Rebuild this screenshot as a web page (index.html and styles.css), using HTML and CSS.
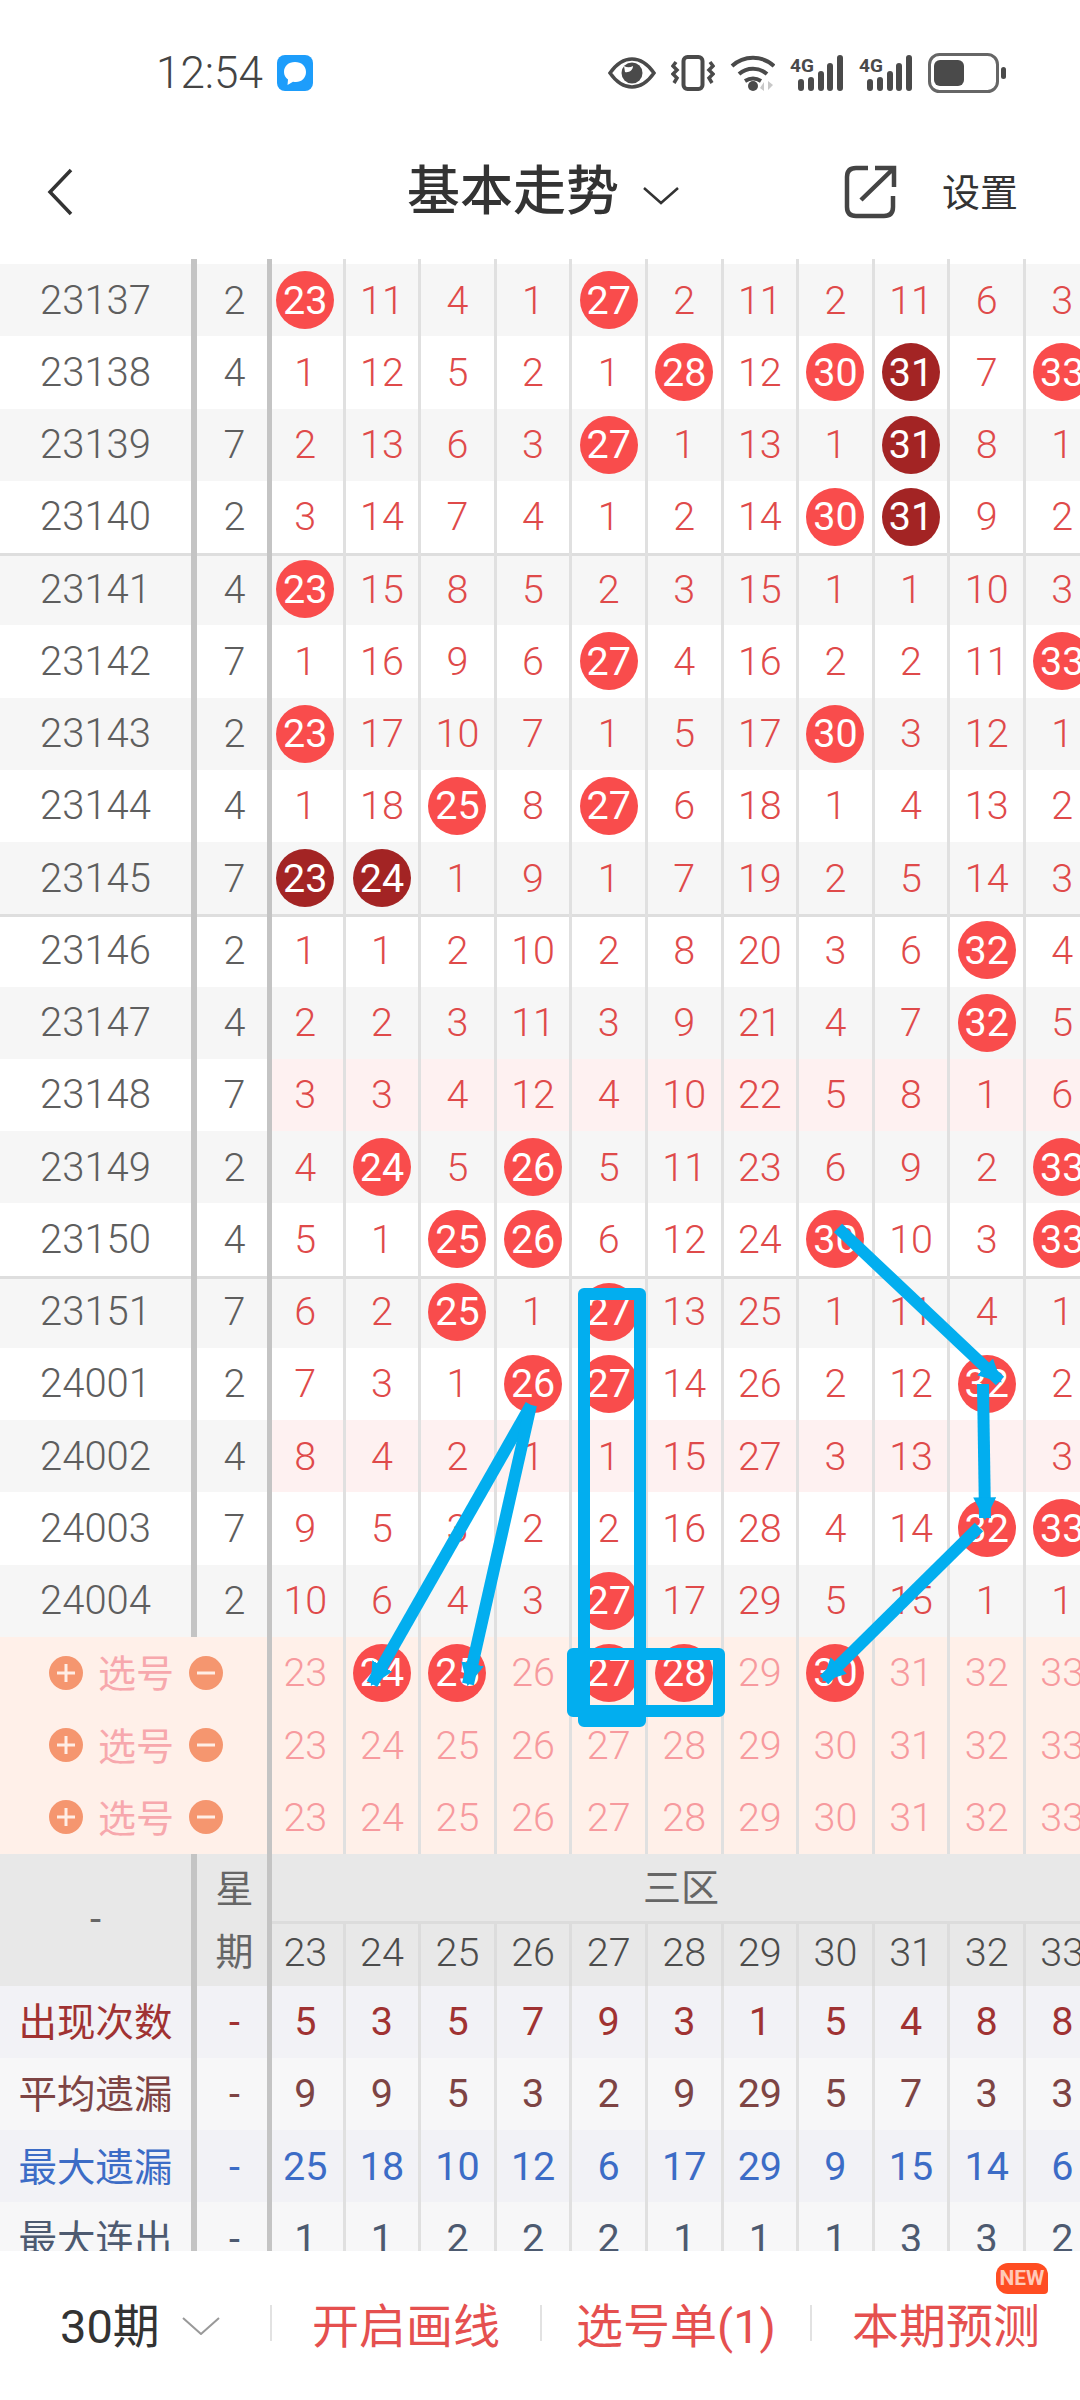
FILE: index.html
```html
<!DOCTYPE html>
<html lang="zh-CN">
<head>
  <meta charset="UTF-8">
  <meta name="viewport" content="width=device-width, initial-scale=1.0">
  <title>基本走势</title>
  <link rel="stylesheet" href="styles.css">
</head>
<body>
<div class="page">
  <div class="status">
    <span class="time">12:54</span>
    <svg class="msg" width="36" height="36" viewBox="0 0 36 36"><rect width="36" height="36" rx="8" fill="#1d9dfb"/><path d="M18 7c6.500 0 11 4 11 10s-4.500 10-10 10c-1 0-2 0-3-.3L10.500 30l.5-5.500C8.500 22.500 7 20 7 17 7 11 11.500 7 18 7z" fill="#fff"/></svg>
    <div class="icons">
      <svg width="48" height="32" viewBox="0 0 48 32"><path d="M2 16C9 6 16 2 24 2s15 4 22 14c-7 10-14 14-22 14S9 26 2 16z" fill="none" stroke="#4a4a4a" stroke-width="3.500"/><circle cx="24" cy="16" r="10.500" fill="#4a4a4a"/><path d="M16 9a9 9 0 0 0 9 0c0 4-4 7-8 6z" fill="#fff"/></svg>
      <svg width="44" height="36" viewBox="0 0 44 36"><rect x="12.500" y="2" width="19" height="32" rx="4" fill="none" stroke="#4a4a4a" stroke-width="4"/><path d="M5 7l-3 4 4 4-4 4 4 4-3 5M39 7l3 4-4 4 4 4-4 4 3 5" fill="none" stroke="#4a4a4a" stroke-width="3.500"/></svg>
      <svg width="45" height="36" viewBox="0 0 45 36"><path d="M2 11C14 0 32 0 44 11M9 19c8-7 20-7 28 0M15 26c5-3 11-3 16 0" fill="none" stroke="#4a4a4a" stroke-width="4"/><circle cx="23" cy="31" r="5" fill="#4a4a4a"/><path d="M34 36v-9l-4 6zM38 26v9l5-5z" fill="#c8c8c8"/></svg>
      <svg width="54" height="36" viewBox="0 0 54 36"><text x="0" y="17" class="net">4G</text><path d="M11 33v-6M21 33v-8M31 33V19M40 33V11M50 33V3" fill="none" stroke="#4a4a4a" stroke-width="6" stroke-linecap="round"/></svg>
      <svg width="54" height="36" viewBox="0 0 54 36"><text x="0" y="17" class="net">4G</text><path d="M11 33v-6M21 33v-8M31 33V19M40 33V11M50 33V3" fill="none" stroke="#4a4a4a" stroke-width="6" stroke-linecap="round"/></svg>
      <svg width="78" height="40" viewBox="0 0 78 40"><rect x="1.500" y="1.500" width="68" height="37" rx="10" fill="none" stroke="#666" stroke-width="3"/><rect x="6" y="7" width="30" height="26" rx="6" fill="#4a4a4a"/><rect x="73" y="14" width="5" height="12" rx="2.500" fill="#4a4a4a"/></svg>
    </div>
  </div>

  <div class="nav">
    <svg width="26" height="48" viewBox="0 0 26 48"><path d="M24 2L3 24l21 22" fill="none" stroke="#333" stroke-width="3.500"/></svg>
    <h1 class="title">基本走势</h1>
    <svg class="caret" width="36" height="18" viewBox="0 0 36 18"><path d="M1 1l17 15L35 1" fill="none" stroke="#333" stroke-width="2.500"/></svg>
    <svg class="share" width="53" height="54" viewBox="0 0 53 54"><path d="M24 3H12C6 3 3 6 3 12v30c0 6 3 9 9 9h28c6 0 9-3 9-9V31" fill="none" stroke="#444" stroke-width="4.500"/><path d="M17 35L49 4M31 3h19v19" fill="none" stroke="#444" stroke-width="4.500"/></svg>
    <span class="set">设置</span>
  </div>

  <div class="chart">
    <div class="row peek"><span class="no"></span><span class="wk"></span><span class="c"></span><span class="c"></span><span class="c"></span><span class="c"></span><span class="c"></span><span class="c"></span><span class="c"></span><span class="c"></span><span class="c"></span><span class="c"></span><span class="c"></span></div>
    <div class="row alt"><span class="no">23137</span><span class="wk">2</span><span class="c"><b class="ball">23</b></span><span class="c">11</span><span class="c">4</span><span class="c">1</span><span class="c"><b class="ball">27</b></span><span class="c">2</span><span class="c">11</span><span class="c">2</span><span class="c">11</span><span class="c">6</span><span class="c">3</span></div>
    <div class="row"><span class="no">23138</span><span class="wk">4</span><span class="c">1</span><span class="c">12</span><span class="c">5</span><span class="c">2</span><span class="c">1</span><span class="c"><b class="ball">28</b></span><span class="c">12</span><span class="c"><b class="ball">30</b></span><span class="c"><b class="ball dk">31</b></span><span class="c">7</span><span class="c"><b class="ball">33</b></span></div>
    <div class="row alt"><span class="no">23139</span><span class="wk">7</span><span class="c">2</span><span class="c">13</span><span class="c">6</span><span class="c">3</span><span class="c"><b class="ball">27</b></span><span class="c">1</span><span class="c">13</span><span class="c">1</span><span class="c"><b class="ball dk">31</b></span><span class="c">8</span><span class="c">1</span></div>
    <div class="row"><span class="no">23140</span><span class="wk">2</span><span class="c">3</span><span class="c">14</span><span class="c">7</span><span class="c">4</span><span class="c">1</span><span class="c">2</span><span class="c">14</span><span class="c"><b class="ball">30</b></span><span class="c"><b class="ball dk">31</b></span><span class="c">9</span><span class="c">2</span></div>
    <div class="row alt sep"><span class="no">23141</span><span class="wk">4</span><span class="c"><b class="ball">23</b></span><span class="c">15</span><span class="c">8</span><span class="c">5</span><span class="c">2</span><span class="c">3</span><span class="c">15</span><span class="c">1</span><span class="c">1</span><span class="c">10</span><span class="c">3</span></div>
    <div class="row"><span class="no">23142</span><span class="wk">7</span><span class="c">1</span><span class="c">16</span><span class="c">9</span><span class="c">6</span><span class="c"><b class="ball">27</b></span><span class="c">4</span><span class="c">16</span><span class="c">2</span><span class="c">2</span><span class="c">11</span><span class="c"><b class="ball">33</b></span></div>
    <div class="row alt"><span class="no">23143</span><span class="wk">2</span><span class="c"><b class="ball">23</b></span><span class="c">17</span><span class="c">10</span><span class="c">7</span><span class="c">1</span><span class="c">5</span><span class="c">17</span><span class="c"><b class="ball">30</b></span><span class="c">3</span><span class="c">12</span><span class="c">1</span></div>
    <div class="row"><span class="no">23144</span><span class="wk">4</span><span class="c">1</span><span class="c">18</span><span class="c"><b class="ball">25</b></span><span class="c">8</span><span class="c"><b class="ball">27</b></span><span class="c">6</span><span class="c">18</span><span class="c">1</span><span class="c">4</span><span class="c">13</span><span class="c">2</span></div>
    <div class="row alt"><span class="no">23145</span><span class="wk">7</span><span class="c"><b class="ball dk">23</b></span><span class="c"><b class="ball dk">24</b></span><span class="c">1</span><span class="c">9</span><span class="c">1</span><span class="c">7</span><span class="c">19</span><span class="c">2</span><span class="c">5</span><span class="c">14</span><span class="c">3</span></div>
    <div class="row sep"><span class="no">23146</span><span class="wk">2</span><span class="c">1</span><span class="c">1</span><span class="c">2</span><span class="c">10</span><span class="c">2</span><span class="c">8</span><span class="c">20</span><span class="c">3</span><span class="c">6</span><span class="c"><b class="ball">32</b></span><span class="c">4</span></div>
    <div class="row alt"><span class="no">23147</span><span class="wk">4</span><span class="c">2</span><span class="c">2</span><span class="c">3</span><span class="c">11</span><span class="c">3</span><span class="c">9</span><span class="c">21</span><span class="c">4</span><span class="c">7</span><span class="c"><b class="ball">32</b></span><span class="c">5</span></div>
    <div class="row miss"><span class="no">23148</span><span class="wk">7</span><span class="c">3</span><span class="c">3</span><span class="c">4</span><span class="c">12</span><span class="c">4</span><span class="c">10</span><span class="c">22</span><span class="c">5</span><span class="c">8</span><span class="c">1</span><span class="c">6</span></div>
    <div class="row alt"><span class="no">23149</span><span class="wk">2</span><span class="c">4</span><span class="c"><b class="ball">24</b></span><span class="c">5</span><span class="c"><b class="ball">26</b></span><span class="c">5</span><span class="c">11</span><span class="c">23</span><span class="c">6</span><span class="c">9</span><span class="c">2</span><span class="c"><b class="ball">33</b></span></div>
    <div class="row"><span class="no">23150</span><span class="wk">4</span><span class="c">5</span><span class="c">1</span><span class="c"><b class="ball">25</b></span><span class="c"><b class="ball">26</b></span><span class="c">6</span><span class="c">12</span><span class="c">24</span><span class="c"><b class="ball">30</b></span><span class="c">10</span><span class="c">3</span><span class="c"><b class="ball">33</b></span></div>
    <div class="row alt sep"><span class="no">23151</span><span class="wk">7</span><span class="c">6</span><span class="c">2</span><span class="c"><b class="ball">25</b></span><span class="c">1</span><span class="c"><b class="ball">27</b></span><span class="c">13</span><span class="c">25</span><span class="c">1</span><span class="c">11</span><span class="c">4</span><span class="c">1</span></div>
    <div class="row"><span class="no">24001</span><span class="wk">2</span><span class="c">7</span><span class="c">3</span><span class="c">1</span><span class="c"><b class="ball">26</b></span><span class="c"><b class="ball">27</b></span><span class="c">14</span><span class="c">26</span><span class="c">2</span><span class="c">12</span><span class="c"><b class="ball">32</b></span><span class="c">2</span></div>
    <div class="row alt miss"><span class="no">24002</span><span class="wk">4</span><span class="c">8</span><span class="c">4</span><span class="c">2</span><span class="c">1</span><span class="c">1</span><span class="c">15</span><span class="c">27</span><span class="c">3</span><span class="c">13</span><span class="c">1</span><span class="c">3</span></div>
    <div class="row"><span class="no">24003</span><span class="wk">7</span><span class="c">9</span><span class="c">5</span><span class="c">3</span><span class="c">2</span><span class="c">2</span><span class="c">16</span><span class="c">28</span><span class="c">4</span><span class="c">14</span><span class="c"><b class="ball">32</b></span><span class="c"><b class="ball">33</b></span></div>
    <div class="row alt"><span class="no">24004</span><span class="wk">2</span><span class="c">10</span><span class="c">6</span><span class="c">4</span><span class="c">3</span><span class="c"><b class="ball">27</b></span><span class="c">17</span><span class="c">29</span><span class="c">5</span><span class="c">15</span><span class="c">1</span><span class="c">1</span></div>

    <div class="row sel">
      <span class="pick"><svg width="34" height="34" viewBox="0 0 34 34"><circle cx="17" cy="17" r="17" fill="#f5966f"/><path d="M8 17h18M17 8v18" stroke="#ffeee6" stroke-width="3"/></svg><span class="pick-txt">选号</span><svg width="34" height="34" viewBox="0 0 34 34"><circle cx="17" cy="17" r="17" fill="#f5966f"/><path d="M8 17h18" stroke="#ffeee6" stroke-width="3"/></svg></span>
      <span class="c">23</span><span class="c"><b class="ball">24</b></span><span class="c"><b class="ball">25</b></span><span class="c">26</span><span class="c"><b class="ball">27</b></span><span class="c"><b class="ball">28</b></span><span class="c">29</span><span class="c"><b class="ball">30</b></span><span class="c">31</span><span class="c">32</span><span class="c">33</span>
    </div>
    <div class="row sel">
      <span class="pick"><svg width="34" height="34" viewBox="0 0 34 34"><circle cx="17" cy="17" r="17" fill="#f5966f"/><path d="M8 17h18M17 8v18" stroke="#ffeee6" stroke-width="3"/></svg><span class="pick-txt">选号</span><svg width="34" height="34" viewBox="0 0 34 34"><circle cx="17" cy="17" r="17" fill="#f5966f"/><path d="M8 17h18" stroke="#ffeee6" stroke-width="3"/></svg></span>
      <span class="c">23</span><span class="c">24</span><span class="c">25</span><span class="c">26</span><span class="c">27</span><span class="c">28</span><span class="c">29</span><span class="c">30</span><span class="c">31</span><span class="c">32</span><span class="c">33</span>
    </div>
    <div class="row sel">
      <span class="pick"><svg width="34" height="34" viewBox="0 0 34 34"><circle cx="17" cy="17" r="17" fill="#f5966f"/><path d="M8 17h18M17 8v18" stroke="#ffeee6" stroke-width="3"/></svg><span class="pick-txt">选号</span><svg width="34" height="34" viewBox="0 0 34 34"><circle cx="17" cy="17" r="17" fill="#f5966f"/><path d="M8 17h18" stroke="#ffeee6" stroke-width="3"/></svg></span>
      <span class="c">23</span><span class="c">24</span><span class="c">25</span><span class="c">26</span><span class="c">27</span><span class="c">28</span><span class="c">29</span><span class="c">30</span><span class="c">31</span><span class="c">32</span><span class="c">33</span>
    </div>

    <div class="head">
      <span class="no">-</span>
      <span class="wk wk-stack"><span>星</span><span>期</span></span>
      <div class="head-main">
        <div class="zone">三区</div>
        <div class="head-nums"><span class="c">23</span><span class="c">24</span><span class="c">25</span><span class="c">26</span><span class="c">27</span><span class="c">28</span><span class="c">29</span><span class="c">30</span><span class="c">31</span><span class="c">32</span><span class="c">33</span></div>
      </div>
    </div>

    <div class="row stat s1"><span class="no">出现次数</span><span class="wk">-</span><span class="c">5</span><span class="c">3</span><span class="c">5</span><span class="c">7</span><span class="c">9</span><span class="c">3</span><span class="c">1</span><span class="c">5</span><span class="c">4</span><span class="c">8</span><span class="c">8</span></div>
    <div class="row stat s2"><span class="no">平均遗漏</span><span class="wk">-</span><span class="c">9</span><span class="c">9</span><span class="c">5</span><span class="c">3</span><span class="c">2</span><span class="c">9</span><span class="c">29</span><span class="c">5</span><span class="c">7</span><span class="c">3</span><span class="c">3</span></div>
    <div class="row stat s3"><span class="no">最大遗漏</span><span class="wk">-</span><span class="c">25</span><span class="c">18</span><span class="c">10</span><span class="c">12</span><span class="c">6</span><span class="c">17</span><span class="c">29</span><span class="c">9</span><span class="c">15</span><span class="c">14</span><span class="c">6</span></div>
    <div class="row stat s4"><span class="no">最大连出</span><span class="wk">-</span><span class="c">1</span><span class="c">1</span><span class="c">2</span><span class="c">2</span><span class="c">2</span><span class="c">1</span><span class="c">1</span><span class="c">1</span><span class="c">3</span><span class="c">3</span><span class="c">2</span></div>
  </div>

  <div class="foot">
    <div class="foot-item period">30期<svg width="38" height="18" viewBox="0 0 38 18"><path d="M1 1l18 16L37 1" fill="none" stroke="#999" stroke-width="2"/></svg></div>
    <div class="foot-item">开启画线</div>
    <div class="foot-item">选号单(1)</div>
    <div class="foot-item">本期预测<span class="new">NEW</span></div>
  </div>

  <!-- hand drawn marks on top of the chart -->
  <svg class="draw" width="1080" height="2400" viewBox="0 0 1080 2400">
    <defs>
      <marker id="head" viewBox="0 0 10 10" refX="9" refY="5" markerWidth="23" markerHeight="23" markerUnits="userSpaceOnUse" orient="auto"><path d="M0 0L10 5L0 10z" fill="#02aeef"/></marker>
    </defs>
    <g fill="none" stroke="#02aeef" stroke-width="12" stroke-linejoin="round">
      <rect x="584" y="1294" width="56" height="427"/>
      <rect x="573" y="1654" width="146" height="57"/>
    </g>
    <g fill="none" stroke="#02aeef" stroke-width="12" marker-end="url(#head)">
      <path d="M531 1405L372 1684"/>
      <path d="M531 1405L468 1684"/>
      <path d="M838 1228L1000 1381"/>
      <path d="M983 1384L985 1518"/>
      <path d="M979 1527L824 1680"/>
    </g>
  </svg>
</div>
</body>
</html>
```
FILE: styles.css
```css
* { box-sizing: border-box; }
body { margin: 0; background: #fff; font-family: Roboto, "Noto Sans CJK SC", sans-serif; }
.page { position: relative; width: 1080px; height: 2400px; overflow: hidden; }

.status { display: flex; align-items: center; height: 146px; padding: 0 74px 0 156px; color: #444; }
.time { font-size: 44px; font-weight: 300; }
.msg { margin-left: 14px; }
.icons { display: flex; align-items: center; gap: 15px; margin-left: auto; }
.net { font: 700 19px Roboto, sans-serif; fill: #4a4a4a; }

.nav { display: flex; align-items: center; height: 113px; padding: 0 62px 22px 47px; color: #333; }
.title { margin: 2px 0 0 334px; font-size: 53px; font-weight: 500; line-height: 1; }
.caret { margin-left: 24px; margin-top: 8px; }
.share { margin-left: auto; }
.set { margin-left: 45px; padding-bottom: 5px; font-size: 38px; }

.chart { width: 1080px; height: 1992px; overflow: hidden; }
.row { display: grid; grid-template-columns: 197px 75px 73.6px repeat(10, 75.6px); width: 1102px; height: 72.25px; }
.peek { height: 5px; }
.alt { background: #f6f6f6; }
.sep { box-shadow: inset 0 3px 0 #dedede; }

.no, .wk, .c { display: flex; align-items: center; justify-content: center; height: 100%; font-size: 39.5px; font-weight: 300; }
.no { border-right: 6px solid #c4c4c4; color: #5e5e5e; font-size: 40px; }
.wk { border-right: 5px solid #c4c4c4; padding-left: 5px; color: #5e5e5e; }
.c { border-right: 3px solid #e0e0e0; color: #df4a4a; }
.wk + .c { padding-right: 4px; }
.ball { display: flex; align-items: center; justify-content: center; flex: none; width: 58px; height: 58px; border-radius: 50%; background: #f94c4c; color: #fff; font-weight: 400; }
.ball.dk { background: #a32424; }
.miss .c { background: #fef1f1; }

.sel { background: #fff0e9; }
.sel .c { color: #f79a9e; }
.sel .ball { color: #fff; }
.pick { grid-column: 1 / 3; display: flex; align-items: center; gap: 15px; padding-left: 49px; border-right: 5px solid #c4c4c4; }
.pick-txt { padding-bottom: 4px; font-size: 38px; color: #f7a8ad; }
.pick + .c { padding-right: 4px; }

.head { display: grid; grid-template-columns: 197px 75px 1fr; width: 1102px; height: 132px; background: #e8e8e8; }
.head .no, .head .wk { color: #666; font-weight: 400; }
.wk-stack { flex-direction: column; justify-content: space-around; padding-bottom: 5px; font-size: 38px; }
.zone { display: flex; align-items: center; justify-content: center; height: 70px; padding: 0 12px 5px 0; border-bottom: 3px solid #dcdcdc; font-size: 38px; color: #666; }
.head-nums { display: grid; grid-template-columns: 73.6px repeat(10, 75.6px); height: 62px; padding-bottom: 0; }
.head-nums .c { padding-bottom: 4px; color: #4c4c4c; border-right-color: #dcdcdc; }
.head-nums .c:first-child { padding-right: 4px; }

.stat .no { padding-bottom: 5px; font-size: 38.5px; font-weight: 400; }
.stat .wk, .stat .c { font-weight: 400; }
.s1, .s3 { background: #f2f2f6; }
.s2, .s4 { background: #f7f7f8; }
.s1 .no, .s1 .c, .s1 .wk { color: #a03232; }
.s2 .no, .s2 .c, .s2 .wk { color: #7d4444; }
.s3 .no, .s3 .c, .s3 .wk { color: #3c6cc6; }
.s4 .no, .s4 .c, .s4 .wk { color: #4d5a70; }

.foot { display: grid; grid-template-columns: repeat(4, 270px); align-items: center; height: 149px; padding-bottom: 6px; }
.foot-item { position: relative; display: flex; align-items: center; justify-content: center; height: 36px; border-left: 2px solid #e2e2e2; font-size: 47px; color: #e5504f; }
.period { justify-content: flex-start; padding-left: 60px; border-left: 0; color: #333; }
.period svg { margin: 6px 0 0 22px; }
.new { position: absolute; top: -42px; right: 32px; width: 52px; height: 31px; border-radius: 12px 12px 4px 12px; background: #ff4d22; color: #ffc9b8; font-size: 21px; font-weight: 700; line-height: 31px; text-align: center; }

.draw { position: absolute; left: 0; top: 0; pointer-events: none; }
```
